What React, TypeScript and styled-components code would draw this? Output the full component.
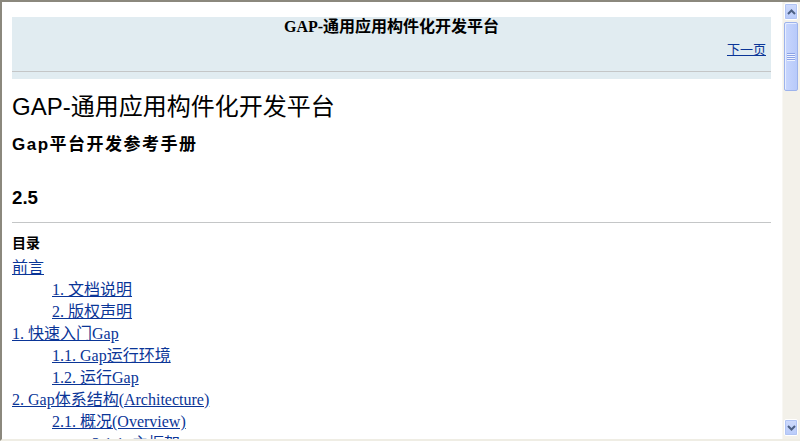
import React from 'react';
import styled, { createGlobalStyle } from 'styled-components';

const GlobalStyle = createGlobalStyle`
  html, body {
    margin: 0;
    padding: 0;
    background: #ffffff;
    overflow: hidden;
  }
`;

const Frame = styled.div`
  width: 800px;
  height: 441px;
  box-sizing: border-box;
  border-top: 2px solid #8b887d;
  border-left: 2px solid #8b887d;
  border-bottom: 2px solid #efede4;
  display: flex;
  background: #ffffff;
`;

const Viewport = styled.div`
  flex: 1;
  overflow: hidden;
  padding: 15px 11px 0 10px;
  font-family: 'Liberation Serif', 'Noto Sans CJK SC', serif;
  color: #000;
`;

const NavHeader = styled.div`
  background: #e1ecf1;
  padding: 0 5px 7px 5px;
`;

const NavTitle = styled.div`
  text-align: center;
  font-weight: bold;
  font-size: 16px;
  line-height: 20px;
`;

const NavRow = styled.div`
  margin-top: 3px;
  text-align: right;
  font-size: 13px;
  line-height: 20px;
`;

const Link = styled.a`
  color: #0a3597;
  text-decoration: underline;
  cursor: pointer;
`;

const Rule = styled.hr<{ $top: number; $bleed?: boolean }>`
  margin: ${(p) => p.$top}px ${(p) => (p.$bleed ? -5 : 0)}px 0;
  border: none;
  border-top: 1px solid #c4c6c7;
  height: 0;
`;

const BookTitle = styled.h1`
  margin: 14px 0 0;
  font-family: 'Liberation Sans', 'Noto Sans CJK SC', sans-serif;
  font-weight: normal;
  font-size: 24px;
  line-height: 28px;
`;

const Subtitle = styled.h2`
  margin: 13px 0 0;
  font-family: 'Liberation Sans', 'Noto Sans CJK SC', sans-serif;
  font-weight: bold;
  font-size: 17px;
  line-height: 22px;
  letter-spacing: 1.5px;
`;

const Version = styled.h3`
  margin: 31px 0 0;
  font-family: 'Liberation Sans', sans-serif;
  font-weight: bold;
  font-size: 18.7px;
  line-height: 22px;
`;

const TocTitle = styled.div`
  margin-top: 10px;
  font-family: 'Liberation Sans', 'Noto Sans CJK SC', sans-serif;
  font-weight: bold;
  font-size: 14px;
  line-height: 20px;
`;

const TocList = styled.div`
  margin-top: 4px;
  display: flex;
  flex-direction: column;
`;

const TocItem = styled.div<{ $level: number }>`
  padding-left: ${(p) => p.$level * 40}px;
  font-size: 16px;
  line-height: 22px;
  white-space: nowrap;
`;

const Scrollbar = styled.div`
  width: 18px;
  display: flex;
  flex-direction: column;
  background: #f3f1ea;
  border-left: 1px solid #f8f7f3;
  box-sizing: border-box;
  padding: 1px 2px 1px 1px;
`;

const ScrollButton = styled.div`
  height: 15px;
  margin-bottom: 2px;
  border: 1px solid #ffffff;
  outline: 1px solid #b1c4f4;
  outline-offset: -2px;
  border-radius: 2px;
  background: linear-gradient(#cfdbfc, #b9cbfa);
  display: flex;
  align-items: center;
  justify-content: center;
`;

const Thumb = styled.div`
  height: 67px;
  border: 1px solid #9db3ec;
  border-radius: 2px;
  background: linear-gradient(90deg, #c8d6fd, #b8cafa);
  box-shadow: inset 1px 1px 0 #e6edff;
  display: flex;
  align-items: center;
  justify-content: center;
`;

const Track = styled.div`
  flex: 1;
`;

const Chevron = ({ up }: { up: boolean }) => (
  <svg width="9" height="6" viewBox="0 0 9 6">
    <path
      d={up ? 'M1 5 L4.5 1.5 L8 5' : 'M1 1 L4.5 4.5 L8 1'}
      fill="none"
      stroke="#4d6185"
      strokeWidth="2"
    />
  </svg>
);

const Grip = () => (
  <svg width="8" height="8" viewBox="0 0 8 8">
    {[0, 2, 4, 6].map((y) => (
      <rect key={y} x="0" y={y} width="8" height="1" fill="#8ca3e6" />
    ))}
    {[1, 3, 5, 7].map((y) => (
      <rect key={y} x="0" y={y} width="8" height="1" fill="#eef3ff" />
    ))}
  </svg>
);

const toc: { level: number; text: string }[] = [
  { level: 0, text: '前言' },
  { level: 1, text: '1. 文档说明' },
  { level: 1, text: '2. 版权声明' },
  { level: 0, text: '1. 快速入门Gap' },
  { level: 1, text: '1.1. Gap运行环境' },
  { level: 1, text: '1.2. 运行Gap' },
  { level: 0, text: '2. Gap体系结构(Architecture)' },
  { level: 1, text: '2.1. 概况(Overview)' },
  { level: 2, text: '2.1.1. 主框架' },
];

export default function App() {
  return (
    <>
      <GlobalStyle />
      <Frame>
        <Viewport>
          <NavHeader>
            <NavTitle>GAP-通用应用构件化开发平台</NavTitle>
            <NavRow>
              <Link>下一页</Link>
            </NavRow>
            <Rule $top={11} $bleed />
          </NavHeader>
          <BookTitle>GAP-通用应用构件化开发平台</BookTitle>
          <Subtitle>Gap平台开发参考手册</Subtitle>
          <Version>2.5</Version>
          <Rule $top={13} />
          <TocTitle>目录</TocTitle>
          <TocList>
            {toc.map((item) => (
              <TocItem key={item.text} $level={item.level}>
                <Link>{item.text}</Link>
              </TocItem>
            ))}
          </TocList>
        </Viewport>
        <Scrollbar>
          <ScrollButton>
            <Chevron up />
          </ScrollButton>
          <Thumb>
            <Grip />
          </Thumb>
          <Track />
          <ScrollButton>
            <Chevron up={false} />
          </ScrollButton>
        </Scrollbar>
      </Frame>
    </>
  );
}
